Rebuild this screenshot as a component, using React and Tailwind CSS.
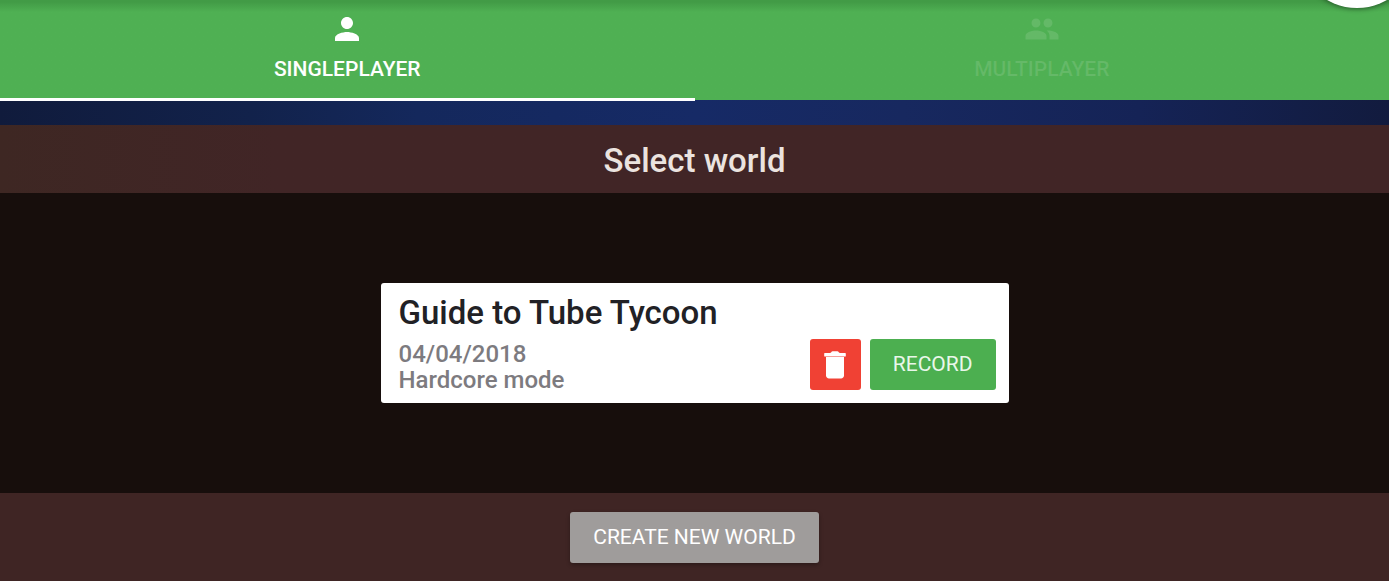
import { MdPeople, MdPerson } from "react-icons/md";

const worlds = [
  { name: "Guide to Tube Tycoon", date: "04/04/2018", mode: "Hardcore mode" },
];

function TrashIcon({ className }) {
  return (
    <svg viewBox="0 0 24 24" fill="currentColor" className={className} aria-hidden="true">
      <path d="M5.2 4H8.6Q9.2 4 9.5 3.5Q9.8 2.9 10.4 2.9H13.6Q14.2 2.9 14.5 3.5Q14.8 4 15.4 4H18.8Q19.2 4 19.2 4.4V6Q19.2 6.4 18.8 6.4H5.2Q4.8 6.4 4.8 6V4.4Q4.8 4 5.2 4Z" />
      <path d="M6 6.7H18V19c0 1.1-.9 2-2 2H8c-1.1 0-2-.9-2-2Z" />
    </svg>
  );
}

function Tab({ icon: Icon, label, active }) {
  return (
    <button
      type="button"
      role="tab"
      aria-selected={active}
      className={`relative flex flex-1 flex-col items-center pt-[11px] text-[21px] leading-6 font-medium ${
        active ? "text-white" : "text-white/12"
      }`}
    >
      <Icon className="size-9" aria-hidden="true" />
      <span className="mt-[10px]">{label}</span>
      {active && (
        <span className="absolute inset-x-0 -bottom-px h-[3px] bg-white" />
      )}
    </button>
  );
}

function WorldCard({ world }) {
  return (
    <article className="flex w-full max-w-[628px] items-end justify-between rounded-[3px] bg-white pt-[10px] pr-[13px] pb-[10px] pl-[18px]">
      <div>
        <h2 className="text-[33px] leading-10 font-medium text-[#212125]">
          {world.name}
        </h2>
        <p className="mt-2 text-[24px] leading-[26px] font-medium text-[#7d7b7f]">
          {world.date}
          <br />
          {world.mode}
        </p>
      </div>
      <div className="mb-[3px] flex gap-[9px]">
        <button
          type="button"
          aria-label="Delete world"
          className="flex size-[51px] items-center justify-center rounded-[3px] bg-[#f04134] text-white"
        >
          <TrashIcon className="size-9" />
        </button>
        <button
          type="button"
          className="h-[51px] rounded-[3px] bg-[#4caf50] px-[23px] pt-px text-[21px] text-[#e9f7ea]"
        >
          RECORD
        </button>
      </div>
    </article>
  );
}

export default function App() {
  return (
    <div className="relative flex min-h-screen flex-col overflow-hidden bg-[#170e0c] font-[Roboto,sans-serif]">
      <header className="bg-[linear-gradient(to_right,#101b3c_0%,#12224b_18%,#14285c_30%,#162a66_50%,#17285f_65%,#152356_82%,#121b3e_100%)] pb-[25px]">
        <div
          role="tablist"
          className="flex h-[100px] bg-[#4fb053] bg-linear-to-b from-[#429b46] from-[2px] to-[#4fb053] to-[12px]"
        >
          <Tab icon={MdPerson} label="SINGLEPLAYER" active />
          <Tab icon={MdPeople} label="MULTIPLAYER" active={false} />
        </div>
      </header>
      <button
        type="button"
        aria-label="Menu"
        className="absolute -top-[112px] -right-[28px] size-[120px] rounded-full bg-white shadow-[0_1px_5px_rgba(0,0,0,0.45)]"
      />
      <h1 className="bg-linear-to-r from-[#3e2723] to-[#412526] to-20% pt-4 pb-3 text-center text-[33px] leading-10 font-medium text-[#ebe3df]">
        Select world
      </h1>
      <main className="flex flex-1 flex-col items-center justify-center gap-4 px-6">
        {worlds.map((world) => (
          <WorldCard key={world.name} world={world} />
        ))}
      </main>
      <footer className="flex justify-center bg-[#3f2524] pt-[19px] pb-[18px]">
        <button
          type="button"
          className="h-[51px] rounded-[3px] bg-[#9f9c9b] px-[23px] pt-px text-[21px] text-white shadow-[0_2px_4px_rgba(0,0,0,0.3)]"
        >
          CREATE NEW WORLD
        </button>
      </footer>
    </div>
  );
}
